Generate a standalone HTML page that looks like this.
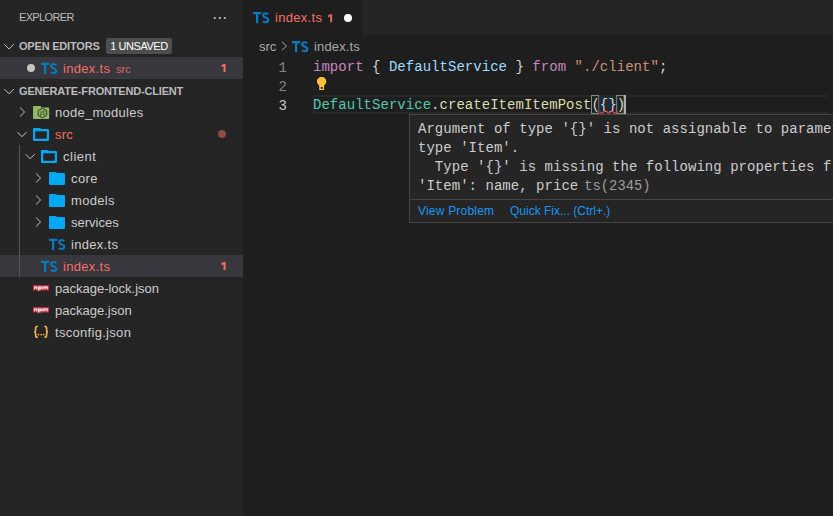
<!DOCTYPE html>
<html><head><meta charset="utf-8">
<style>
*{margin:0;padding:0;box-sizing:border-box}
html,body{width:833px;height:516px;overflow:hidden;background:#1e1e1e;font-family:"Liberation Sans",sans-serif}
.abs{position:absolute}
#side{position:absolute;left:0;top:0;width:243px;height:516px;background:#252526}
.t{position:absolute;white-space:nowrap;line-height:22px}
.row{position:absolute;left:0;width:243px;height:22px}
.sel{background:#37373d}
.name{font-size:13px;color:#cccccc;margin-top:1px;letter-spacing:0.15px}
.err{color:#f56e66}
.hdr{font-size:11px;font-weight:bold;color:#bbbbbb;letter-spacing:-0.2px}
.cnt{font-size:11px;font-weight:bold;color:#e06c60}
#tabs{position:absolute;left:243px;top:0;width:590px;height:35px;background:#252526}
#tab{position:absolute;left:243px;top:0;width:119px;height:35px;background:#1e1e1e}
.code{position:absolute;margin-top:1px;font-family:"Liberation Mono",monospace;font-size:14px;letter-spacing:0.035px;line-height:19px;white-space:pre}
.ln{position:absolute;margin-top:2px;font-family:"Liberation Mono",monospace;font-size:14px;line-height:19px;color:#858585;text-align:right;width:30px;left:257px}
#hover{position:absolute;left:409px;top:114px;width:440px;height:109px;background:#252526;border:1px solid #454545}
</style></head><body>
<div id="side">
  <div class="t" style="left:19px;top:6px;font-size:11px;color:#bbbbbb;letter-spacing:-0.65px">EXPLORER</div>

  <div class="t hdr" style="left:19px;top:35px">OPEN EDITORS</div>
  <div class="abs" style="left:106px;top:38px;width:66px;height:16px;background:#4d4d4d;border-radius:2px;color:#fff;font-size:11px;line-height:17px;text-align:center;letter-spacing:-0.45px">1 UNSAVED</div>
  <div class="row sel" style="top:57px"></div>
  <div class="t name err" style="left:63px;top:57px;letter-spacing:0.3px">index.ts</div>
  <div class="t err" style="left:116px;top:58px;font-size:11px;opacity:.9">src</div>

  <div class="t hdr" style="left:19px;top:80px;letter-spacing:-0.18px">GENERATE-FRONTEND-CLIENT</div>
  <div class="t name" style="left:55px;top:101px;letter-spacing:0.26px">node_modules</div>
  <div class="t name err" style="left:55px;top:123px">src</div>
  <div class="t name" style="left:63px;top:145px;letter-spacing:0.5px">client</div>
  <div class="t name" style="left:71px;top:167px;letter-spacing:0.4px">core</div>
  <div class="t name" style="left:71px;top:189px;letter-spacing:0.33px">models</div>
  <div class="t name" style="left:71px;top:211px;letter-spacing:0px">services</div>
  <div class="t name" style="left:71px;top:233px;letter-spacing:0.3px">index.ts</div>
  <div class="row sel" style="top:255px"></div>
  <div class="t name err" style="left:63px;top:255px;letter-spacing:0.3px">index.ts</div>
  <div class="t name" style="left:55px;top:277px;letter-spacing:0px">package-lock.json</div>
  <div class="t name" style="left:55px;top:299px;letter-spacing:0px">package.json</div>
  <div class="t name" style="left:55px;top:321px;letter-spacing:0.3px">tsconfig.json</div>

  <svg class="abs" style="left:0;top:0" width="243" height="516" viewBox="0 0 243 516">
    <defs>
      <g id="ts"><path d="M0 1.1 H8.2 M4.1 0 V11.3" fill="none" stroke="#067bbf" stroke-width="2.2"/><path d="M15.3 2.4 C14.7 1.5 13.9 1.15 12.8 1.15 C11.2 1.15 10.2 2 10.2 3.3 C10.2 6.3 15.3 4.8 15.3 8 C15.3 9.4 14.2 10.15 12.7 10.15 C11.5 10.15 10.6 9.8 10 9" fill="none" stroke="#067bbf" stroke-width="2.05"/></g>
      <path id="fold" d="M1 0 H6.8 L8.2 1.1 H15 Q16 1.1 16 2.1 V12 Q16 13 15 13 H1 Q0 13 0 12 V1 Q0 0 1 0 Z" fill="#03a9f4"/>
      <path id="ofold" d="M1 0 H6.8 L8.2 1.1 H15 Q16 1.1 16 2.1 V12 Q16 13 15 13 H1 Q0 13 0 12 V1 Q0 0 1 0 Z M2.2 3.3 V10.8 H13.8 V3.3 Z" fill="#03a9f4" fill-rule="evenodd"/>
      <g id="npm"><rect x="0" y="0" width="16" height="5.2" fill="#d63040"/><rect x="4.8" y="5" width="3.4" height="1" fill="#d63040"/><path d="M1.2 1.2 H4.2 V4 H3.2 V2.2 H2.2 V4 H1.2 Z M4.8 1.2 H8.6 V4 H6.2 V5.2 H5 V4 Z M6.2 2.2 V3 H7.4 V2.2 Z M9.4 1.2 H14.8 V4 H13.8 V2.2 H12.6 V4 H11.6 V2.2 H10.6 V4 H9.4 Z" fill="#fff"/></g>
    </defs>
    <g fill="none" stroke="#c5c5c5" stroke-width="1">
      <path d="M4.3 44.2 L9.1 49 L13.9 44.2"/>
      <path d="M4.3 89 L9.1 93.8 L13.9 89"/>
      <path d="M20.1 107.6 L24.6 112 L20.1 116.4"/>
      <path d="M17.4 132.2 L22 136.6 L26.6 132.2"/>
      <path d="M25.6 154.2 L30.2 158.6 L34.8 154.2"/>
      <path d="M36.1 173.6 L40.6 178 L36.1 182.4"/>
      <path d="M36.1 195.6 L40.6 200 L36.1 204.4"/>
      <path d="M36.1 217.6 L40.6 222 L36.1 226.4"/>
    </g>
    <circle cx="214.8" cy="18" r="1.1" fill="#c5c5c5"/><circle cx="219.8" cy="18" r="1.1" fill="#c5c5c5"/><circle cx="224.8" cy="18" r="1.1" fill="#c5c5c5"/>
    <circle cx="31" cy="68" r="4" fill="#c5c5c5"/>
    <path transform="translate(221 63.8)" d="M2.5 0.2 H4.6 V8.2 H2.5 V2.6 L0.5 3.3 L0.2 1.6 Z" fill="#e66f62"/>
    <path transform="translate(221 261.8)" d="M2.5 0.2 H4.6 V8.2 H2.5 V2.6 L0.5 3.3 L0.2 1.6 Z" fill="#e66f62"/>
    <use href="#ts" x="41" y="62.8"/>
    <!-- node_modules -->
    <path d="M34 106 H40.3 L41.8 107.4 H48.2 Q49.2 107.4 49.2 108.4 V118 Q49.2 119 48.2 119 H34 Q33 119 33 118 V107 Q33 106 34 106 Z" fill="#92b764"/>
    <path d="M42.4 108.2 L46.6 110.6 L46.6 115.4 L42.4 117.8 L38.2 115.4 L38.2 110.6 Z" fill="none" stroke="#2b3a22" stroke-width="1"/>
    <path d="M41 111.3 V114.6 Q41 115.6 40 115.6" fill="none" stroke="#2b3a22" stroke-width="0.8"/>
    <path d="M44.6 111.6 Q44.3 111.1 43.5 111.1 Q42.6 111.1 42.6 111.9 Q42.6 112.6 43.5 112.9 Q44.5 113.3 44.5 114.1 Q44.5 115 43.4 115 Q42.6 115 42.3 114.4" fill="none" stroke="#2b3a22" stroke-width="0.8"/>
    <use href="#ofold" x="33" y="128"/>
    <circle cx="222" cy="134" r="4" fill="#8f4b45"/>
    <rect x="19" y="145" width="1" height="132" fill="#585858"/>
    <use href="#ofold" x="41" y="150"/>
    <use href="#fold" x="49" y="172"/>
    <use href="#fold" x="49" y="194"/>
    <use href="#fold" x="49" y="216"/>
    <use href="#ts" x="49" y="238.8"/>
    <use href="#ts" x="41" y="260.8"/>
    <use href="#npm" x="33" y="285.2"/>
    <use href="#npm" x="33" y="307.2"/>
    <g fill="none" stroke="#f9b845" stroke-width="1.6"><path d="M37.8 326.3 Q35.6 326.3 35.6 328.3 V330.3 Q35.6 331.8 34.2 331.8 Q35.6 331.8 35.6 333.3 V335.5 Q35.6 337.3 37.8 337.3"/><path d="M44.4 326.3 Q46.6 326.3 46.6 328.3 V330.3 Q46.6 331.8 48 331.8 Q46.6 331.8 46.6 333.3 V335.5 Q46.6 337.3 44.4 337.3"/></g><g fill="#f9b845"><circle cx="38.5" cy="334.6" r="0.85"/><circle cx="41.1" cy="334.6" r="0.85"/><circle cx="43.7" cy="334.6" r="0.85"/></g>
  </svg>
</div>

<div id="tabs"></div>
<div id="tab"></div>
<div class="t name err" style="left:275px;top:6px;letter-spacing:0.3px">index.ts</div>
<div class="abs" style="left:343.8px;top:13.8px;width:8.5px;height:8.5px;border-radius:50%;background:#fff"></div>

<!-- breadcrumbs -->
<div class="t" style="left:259px;top:36px;font-size:13px;color:#a9a9a9">src</div>
<div class="t" style="left:314px;top:36px;font-size:13px;color:#a9a9a9;letter-spacing:0.15px">index.ts</div>

<svg class="abs" style="left:243px;top:0" width="590" height="516" viewBox="243 0 590 516">
  <defs>
    <g id="ts2"><path d="M0 1.1 H8.2 M4.1 0 V11.3" fill="none" stroke="#067bbf" stroke-width="2.2"/><path d="M15.3 2.4 C14.7 1.5 13.9 1.15 12.8 1.15 C11.2 1.15 10.2 2 10.2 3.3 C10.2 6.3 15.3 4.8 15.3 8 C15.3 9.4 14.2 10.15 12.7 10.15 C11.5 10.15 10.6 9.8 10 9" fill="none" stroke="#067bbf" stroke-width="2.05"/></g>
  </defs>
  <use href="#ts2" x="253" y="12"/>
  <path transform="translate(327.6 14)" d="M2.5 0.2 H4.6 V8.2 H2.5 V2.6 L0.5 3.3 L0.2 1.6 Z" fill="#d3665b"/>
  <use href="#ts2" x="292" y="41"/>
  <path d="M282 41.8 L286.5 46 L282 50.2" fill="none" stroke="#a9a9a9" stroke-width="1"/>
  <!-- line highlight -->
  <path d="M828 96 H314 V113 H828" fill="none" stroke="#282828" stroke-width="2"/>
  <rect x="591.5" y="95.5" width="7.4" height="18" fill="rgba(0,100,0,0.1)" stroke="#888" stroke-width="1"/>
  <rect x="599.4" y="95" width="16.8" height="19" fill="#202a34"/>
  <rect x="616.7" y="95.5" width="7.4" height="18" fill="rgba(0,100,0,0.1)" stroke="#888" stroke-width="1"/>
  <rect x="624" y="95" width="2" height="19" fill="#aeafad"/>
  <!-- lightbulb -->
  <path d="M316.9 81.6 C316.9 78.8 319 76.9 321.6 76.9 C324.2 76.9 326.3 78.8 326.3 81.6 C326.3 83.4 325.2 84.5 324.1 85.6 L324.1 89.2 Q324.1 90.1 323.2 90.1 L320.1 90.1 Q319.2 90.1 319.2 89.2 L319.2 85.6 C318 84.5 316.9 83.4 316.9 81.6 Z M320.8 86.9 H322.6 V88.9 H320.8 Z" fill="#fcc13b" fill-rule="evenodd"/>
</svg>

<!-- line numbers -->
<div class="ln" style="top:57px">1</div>
<div class="ln" style="top:76px">2</div>
<div class="ln" style="top:95px;color:#c6c6c6">3</div>

<div class="code" style="left:313px;top:57px"><span style="color:#c586c0">import</span><span style="color:#d4d4d4"> { </span><span style="color:#9cdcfe">DefaultService</span><span style="color:#d4d4d4"> } </span><span style="color:#c586c0">from</span><span style="color:#d4d4d4"> </span><span style="color:#ce9178">"./client"</span><span style="color:#d4d4d4">;</span></div>
<div class="code" style="left:313px;top:95px"><span style="color:#4ec9b0">DefaultService</span><span style="color:#d4d4d4">.</span><span style="color:#dcdcaa">createItemItemPost</span><span style="color:#d4d4d4">({})</span></div>

<svg class="abs" style="left:590px;top:100px" width="40" height="20" viewBox="590 100 40 20"><path d="M599.8 111.8 Q600.9 113.6 602.2 113.2 Q603.4 112.6 604.6 111.4 Q606.2 110.6 607.8 112.9 Q609.2 114 610.8 111.4 Q612.3 110.6 613.9 112.9 Q615.5 114 617.2 111.4" fill="none" stroke="#f14c4c" stroke-width="1.2"/></svg>
<!-- hover -->
<div id="hover">
  <div class="code" style="left:8px;top:4px;color:#cccccc">Argument of type '{}' is not assignable to parameter of
type 'Item'.
  Type '{}' is missing the following properties f
'Item': name, price <span style="color:#9d9d9d;font-size:13.8px;margin-left:-2.6px">ts(2345)</span></div>
  <div class="abs" style="left:0;top:84px;width:100%;height:1px;background:#454545"></div>
  <div class="t" style="left:8px;top:85px;font-size:12px;color:#1897f0;letter-spacing:0.2px">View Problem</div>
  <div class="t" style="left:100px;top:85px;font-size:12px;color:#1897f0">Quick Fix... (Ctrl+.)</div>
</div>
</body></html>
